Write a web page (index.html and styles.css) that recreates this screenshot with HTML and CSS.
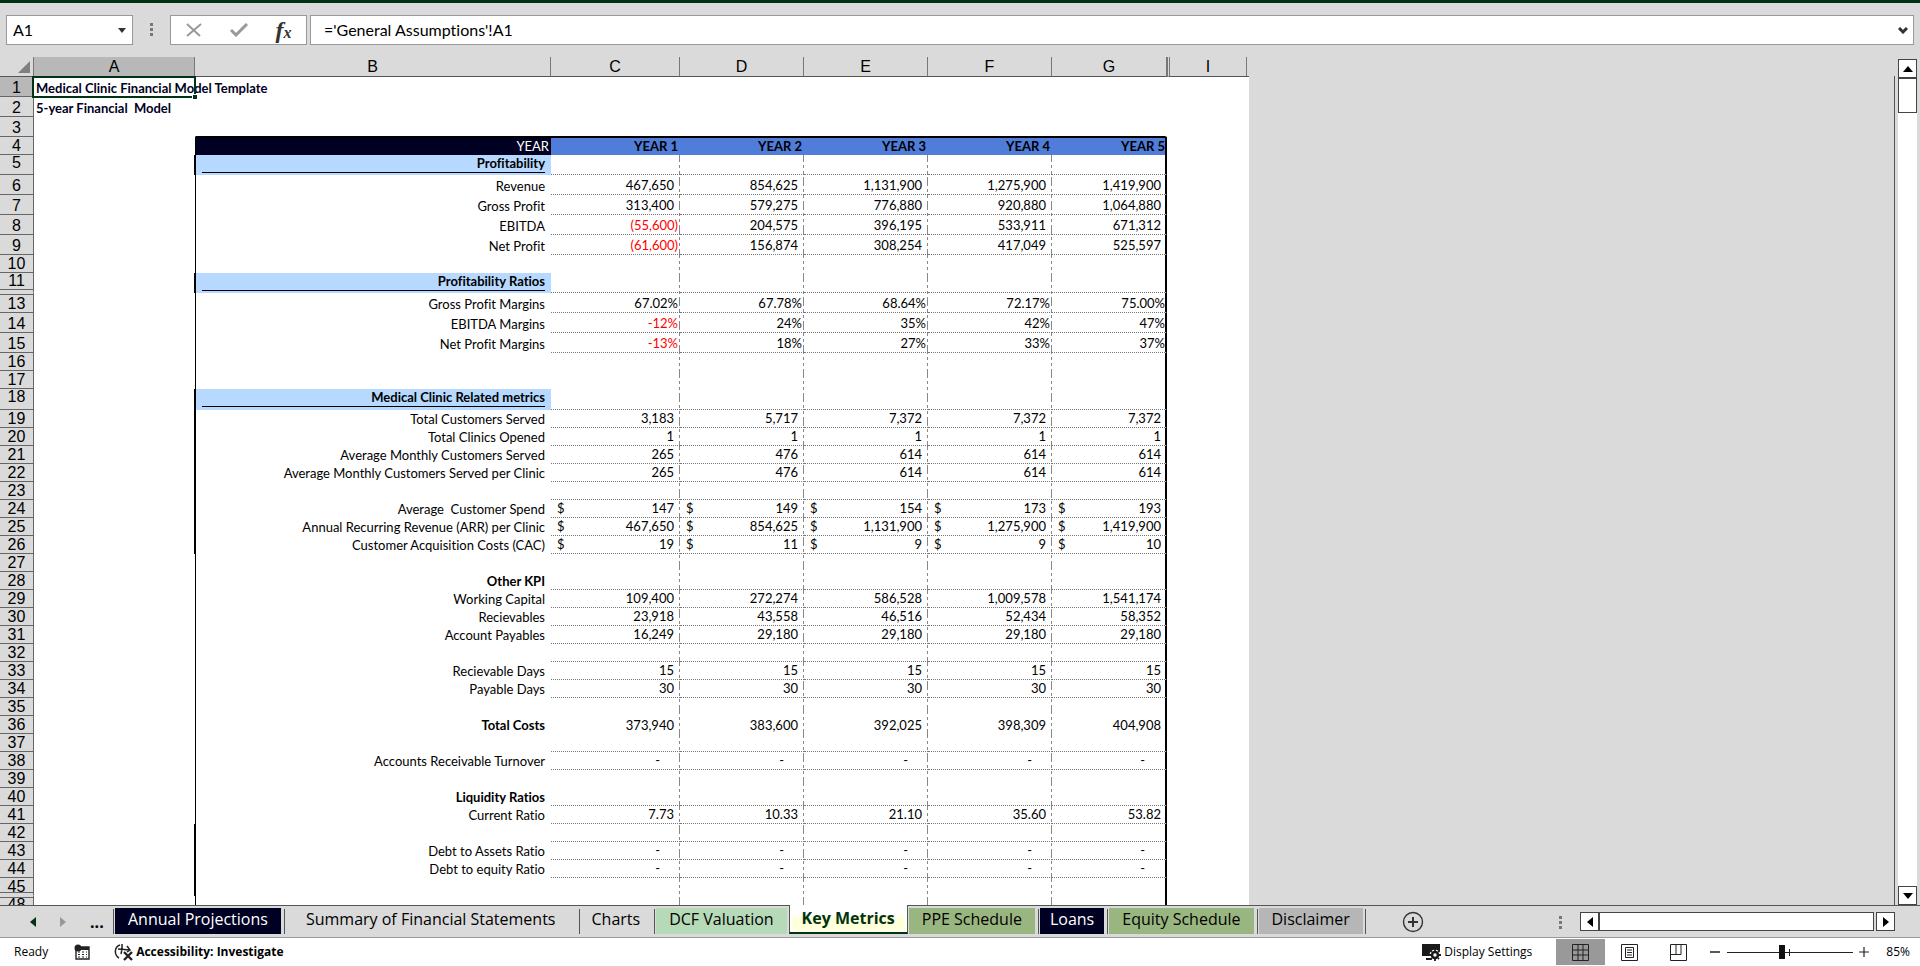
FILE: index.html
```html
<!DOCTYPE html>
<html lang="en">
<head>
<meta charset="utf-8">
<title>Medical Clinic Financial Model</title>
<link rel="stylesheet" href="styles.css">
</head>
<body>
<div class="app">
<div class="title-edge"></div>
<header class="formula-bar">
  <div class="name-box">
    <input class="name-input" aria-label="Name box" value="A1">
    <button class="drop" aria-label="Open name list"><svg width="8" height="5"><path d="M0 0h8L4 5z" fill="#333"/></svg></button>
  </div>
  <svg class="grip" width="4" height="14" fill="#777"><path d="M0 0h3v3H0zM0 5h3v3H0zM0 10h3v3H0z"/></svg>
  <div class="fx-box">
    <button class="fx-btn" aria-label="Cancel"><svg width="16" height="14" fill="none" stroke="#999" stroke-width="2"><path d="M1 1l13 12M15 1L1 13"/></svg></button>
    <button class="fx-btn" aria-label="Enter"><svg width="18" height="14" fill="none" stroke="#999" stroke-width="3"><path d="M1 7l5 5L17 1"/></svg></button>
    <button class="fx-btn fx-text" aria-label="Insert function">f<small>x</small></button>
  </div>
  <div class="formula-box">
    <input class="formula-input" aria-label="Formula" value="='General Assumptions'!A1">
    <button class="drop" aria-label="Expand formula bar"><svg width="10" height="7" fill="none" stroke="#333" stroke-width="3"><path d="M1 1l4 4 4-4"/></svg></button>
  </div>
</header>
<main class="workspace">
  <div class="pane">
    <table class="sheet">
      <colgroup><col class="c-head"><col class="c-a"><col class="c-b"><col class="c-c dash"><col class="c-d dash"><col class="c-d dash"><col class="c-d dash"><col class="c-g"><col class="c-i"></colgroup>
      <thead><tr><th class="corner"><svg width="12" height="12"><path d="M12 0v12H0z" fill="#808080"/></svg><th class="sel">A<th>B<th>C<th>D<th>E<th>F<th class="col-g">G<th class="col-i">I</thead>
      <tbody>
      <tr class="t blank title-row"><th class="sel">1<td class="title"><span class="title-text">Medical Clinic Financial Model Template</span><span class="cursor"></span><td><td><td><td><td><td><td>
      <tr class="t blank"><th>2<td class="title"><span class="title-text">5-year Financial&nbsp; Model</span><td><td><td><td><td><td><td>
      <tr class="t blank above-years"><th>3<td><td><td><td><td><td><td><td>
      <tr class="years"><th>4<td><td>YEAR<td>YEAR 1<td>YEAR 2<td>YEAR 3<td>YEAR 4<td>YEAR 5<td>
      <tr class="t sec dot thick"><th>5<td><td><span>Profitability</span><td><td><td><td><td><td>
      <tr class="t dot"><th>6<td><td>Revenue<td>467,650<td>854,625<td>1,131,900<td>1,275,900<td>1,419,900<td>
      <tr class="t dot"><th>7<td><td>Gross Profit<td>313,400<td>579,275<td>776,880<td>920,880<td>1,064,880<td>
      <tr class="t dot"><th>8<td><td>EBITDA<td class="neg">(55,600)<td>204,575<td>396,195<td>533,911<td>671,312<td>
      <tr class="t dot"><th>9<td><td>Net Profit<td class="neg">(61,600)<td>156,874<td>308,254<td>417,049<td>525,597<td>
      <tr><th>10<td><td><td><td><td><td><td><td>
      <tr class="t sec dot thick before-hidden"><th>11<td><td><span>Profitability Ratios</span><td><td><td><td><td><td>
      <tr class="t dot pct after-hidden"><th>13<td><td>Gross Profit Margins<td>67.02%<td>67.78%<td>68.64%<td>72.17%<td>75.00%<td>
      <tr class="t dot pct"><th>14<td><td>EBITDA Margins<td class="neg">-12%<td>24%<td>35%<td>42%<td>47%<td>
      <tr class="t dot pct"><th>15<td><td>Net Profit Margins<td class="neg">-13%<td>18%<td>27%<td>33%<td>37%<td>
      <tr><th>16<td><td><td><td><td><td><td><td>
      <tr><th>17<td><td><td><td><td><td><td><td>
      <tr class="t sec tall dot thick"><th>18<td><td><span>Medical Clinic Related metrics</span><td><td><td><td><td><td>
      <tr class="dot thick"><th>19<td><td>Total Customers Served<td>3,183<td>5,717<td>7,372<td>7,372<td>7,372<td>
      <tr class="dot thick"><th>20<td><td>Total Clinics Opened<td>1<td>1<td>1<td>1<td>1<td>
      <tr class="dot thick"><th>21<td><td>Average Monthly Customers Served<td>265<td>476<td>614<td>614<td>614<td>
      <tr class="dot thick"><th>22<td><td>Average Monthly Customers Served per Clinic<td>265<td>476<td>614<td>614<td>614<td>
      <tr class="dot thick"><th>23<td><td><td><td><td><td><td><td>
      <tr class="dot thick"><th>24<td><td>Average&nbsp; Customer Spend<td><i>$</i>147<td><i>$</i>149<td><i>$</i>154<td><i>$</i>173<td><i>$</i>193<td>
      <tr class="dot thick"><th>25<td><td>Annual Recurring Revenue (ARR) per Clinic<td><i>$</i>467,650<td><i>$</i>854,625<td><i>$</i>1,131,900<td><i>$</i>1,275,900<td><i>$</i>1,419,900<td>
      <tr class="dot thick"><th>26<td><td>Customer Acquisition Costs (CAC)<td><i>$</i>19<td><i>$</i>11<td><i>$</i>9<td><i>$</i>9<td><i>$</i>10<td>
      <tr><th>27<td><td><td><td><td><td><td><td>
      <tr class="dot"><th>28<td><td><b>Other KPI</b><td><td><td><td><td><td>
      <tr class="dot"><th>29<td><td>Working Capital<td>109,400<td>272,274<td>586,528<td>1,009,578<td>1,541,174<td>
      <tr class="dot"><th>30<td><td>Recievables<td>23,918<td>43,558<td>46,516<td>52,434<td>58,352<td>
      <tr class="dot"><th>31<td><td>Account Payables<td>16,249<td>29,180<td>29,180<td>29,180<td>29,180<td>
      <tr class="dot"><th>32<td><td><td><td><td><td><td><td>
      <tr class="dot"><th>33<td><td>Recievable Days<td>15<td>15<td>15<td>15<td>15<td>
      <tr class="dot"><th>34<td><td>Payable Days<td>30<td>30<td>30<td>30<td>30<td>
      <tr><th>35<td><td><td><td><td><td><td><td>
      <tr><th>36<td><td><b>Total Costs</b><td>373,940<td>383,600<td>392,025<td>398,309<td>404,908<td>
      <tr class="dot"><th>37<td><td><td><td><td><td><td><td>
      <tr class="dot nil"><th>38<td><td>Accounts Receivable Turnover<td>-<td>-<td>-<td>-<td>-<td>
      <tr><th>39<td><td><td><td><td><td><td><td>
      <tr class="dot"><th>40<td><td><b>Liquidity Ratios</b><td><td><td><td><td><td>
      <tr class="dot"><th>41<td><td>Current Ratio<td>7.73<td>10.33<td>21.10<td>35.60<td>53.82<td>
      <tr class="dot thick"><th>42<td><td><td><td><td><td><td><td>
      <tr class="dot thick nil"><th>43<td><td>Debt to Assets Ratio<td>-<td>-<td>-<td>-<td>-<td>
      <tr class="dot thick nil"><th>44<td><td>Debt to equity Ratio<td>-<td>-<td>-<td>-<td>-<td>
      <tr class="thick before-hidden"><th>45<td><td><td><td><td><td><td><td>
      <tr class="after-hidden"><th>48<td><td><td><td><td><td><td><td>
      </tbody>
    </table>
  </div>
  <div class="pane-edge"></div>
  <div class="vscroll">
    <button class="sb" aria-label="Scroll up"><svg width="10" height="6"><path d="M5 0l5 6H0z"/></svg></button>
    <div class="vthumb"></div>
    <div class="vtrack"></div>
    <button class="sb" aria-label="Scroll down"><svg width="10" height="6"><path d="M0 0h10L5 6z"/></svg></button>
  </div>
</main>
<nav class="tabs">
  <div class="tab-nav">
    <button aria-label="Previous sheet"><svg width="6" height="10"><path d="M6 0v10L0 5z" fill="#031"/></svg></button>
    <button aria-label="Next sheet"><svg width="6" height="10"><path d="M0 0v10l6-5z" fill="#999"/></svg></button>
    <button class="more" aria-label="More sheets">...</button>
  </div>
  <button class="tab navy">Annual Projections</button>
  <button class="tab wide">Summary of Financial Statements</button>
  <button class="tab plain">Charts</button>
  <button class="tab mint last">DCF Valuation</button>
  <button class="tab active"><span>Key Metrics</span></button>
  <button class="tab olive first">PPE Schedule</button>
  <button class="tab navy slim">Loans</button>
  <button class="tab olive">Equity Schedule</button>
  <button class="tab gray">Disclaimer</button>
  <button class="add" aria-label="New sheet"><svg width="22" height="22" fill="none" stroke="#333"><circle cx="11" cy="11" r="9.5" stroke-width="1.4"/><path d="M6 11h10M11 6v10" stroke-width="2"/></svg></button>
  <svg class="grip tab-grip" width="4" height="14" fill="#777"><path d="M0 0h3v3H0zM0 5h3v3H0zM0 10h3v3H0z"/></svg>
  <div class="hscroll">
    <button class="sb" aria-label="Scroll left"><svg width="6" height="10"><path d="M6 0v10L0 5z"/></svg></button>
    <div class="hthumb"></div>
    <button class="sb hright" aria-label="Scroll right"><svg width="6" height="10"><path d="M0 0v10l6-5z"/></svg></button>
  </div>
</nav>
<footer class="status">
  <span class="ready">Ready</span>
  <button class="macro" aria-label="Record macro"><svg width="16" height="16"><path d="M3 3h12v12H2V6" fill="none" stroke="#222" stroke-width="1.4"/><path d="M5 3h10v3H5z" fill="#222"/><circle cx="4" cy="4" r="3.5" fill="#222"/><path d="M4 8h2M8 8h2M12 8h1M4 10.500h2M8 10.500h2M12 10.500h1M4 13h2M8 13h2M12 13h1" stroke="#222"/></svg></button>
  <button class="access"><svg width="20" height="18" fill="none" stroke="#222" stroke-width="1.500"><path d="M6 2C0 4 0 12 5 15M4 6l12 1M8 1v5l-1 5M13 3l3 4-3 2"/><path d="M10 9l8 8M18 9l-8 8" stroke-width="2.400"/></svg>Accessibility: Investigate</button>
  <span class="spacer"></span>
  <button class="display"><svg width="20" height="18"><path d="M1 1h18v12H1zM5 15h6v2H5z" fill="#1a1a1a"/><circle cx="14" cy="12" r="5.500" fill="#fff"/><circle cx="14" cy="12" r="3" fill="#fff" stroke="#1a1a1a" stroke-width="2.500"/><path d="M14 6v2M14 16v2M8 12h2M18 12h2M10 8l1 1M17 15l1 1M18 8l-1 1M11 15l-1 1" stroke="#1a1a1a" stroke-width="1.800"/></svg>Display Settings</button>
  <button class="view on" aria-label="Normal view"><svg width="17" height="17" fill="none" stroke="#222"><path d="M.5.5h16v16H.5zM.5 6h16M.5 11h16M6 .5v16M11 .5v16"/></svg></button>
  <button class="view" aria-label="Page layout view"><svg width="17" height="17" fill="none" stroke="#222"><path d="M.5.5h16v16H.5zM4.500 3.500h8v10h-8zM6 6h5M6 8.500h5M6 11h5"/></svg></button>
  <button class="view" aria-label="Page break preview"><svg width="17" height="17" fill="none" stroke="#222"><path d="M.5.5h16v16H.5zM1 10.500h10V1M6 1v9"/></svg></button>
  <button class="zoom-btn minus" aria-label="Zoom out"><svg width="10" height="10"><path d="M0 5h10" stroke="#222" stroke-width="1.500"/></svg></button>
  <input class="zoom" type="range" min="10" max="160" value="75" aria-label="Zoom">
  <button class="zoom-btn plus" aria-label="Zoom in"><svg width="10" height="10"><path d="M0 5h10M5 0v10" stroke="#222" stroke-width="1.200"/></svg></button>
  <button class="percent">85%</button>
</footer>
</div>
</body>
</html>
```
FILE: styles.css
```css
* { box-sizing: border-box; }
body { margin: 0; }
button, input { font: inherit; color: inherit; margin: 0; padding: 0; border: 0; background: none; }
button { display: flex; align-items: center; justify-content: center; }
.app { display: flex; flex-direction: column; height: 100vh; overflow: hidden; background: #dadada; color: #000; font-family: "Open Sans", "Noto Sans", sans-serif; font-variant-ligatures: none; }
.title-edge { height: 3px; flex: none; background: #003214; }

.formula-bar { display: flex; flex: none; padding: 12px 6px; font: 16px/28px Lato, "Open Sans", sans-serif; font-variant-ligatures: none; }
.name-box, .fx-box, .formula-box { display: flex; height: 30px; border: 1px solid #999; background: #fff; }
.name-box { width: 127px; }
.name-input { flex: 1; min-width: 0; padding-left: 6px; }
.drop { width: 20px; flex: none; }
.grip { margin: 8px 16px 0 17px; flex: none; }
.fx-box { width: 137px; justify-content: center; margin-right: 3px; }
.fx-btn { width: 45px; }
.fx-text { font: italic bold 24px/24px "Liberation Serif", serif; color: #333; }
.fx-text small { font-size: 16px; padding-top: 6px; }
.formula-box { flex: 1; }
.formula-input { flex: 1; min-width: 0; padding-left: 13px; }

.workspace { display: flex; flex: 1; min-height: 0; }
.pane { flex: 1; min-width: 0; overflow: hidden; }
.pane-edge { width: 1px; margin-top: 19px; background: #555; }
.sheet { width: 1249px; table-layout: fixed; border-spacing: 0; font: 13px/17px Lato, "Open Sans", sans-serif; font-variant-ligatures: none; }
.c-head { width: 34px; }
.c-a { width: 161px; }
.c-b { width: 356px; }
.c-c { width: 129px; }
.c-d { width: 124px; }
.c-g { width: 115px; }
.c-i { width: 82px; }
.dash { background: repeating-linear-gradient(#888 0 9px, #fff 9px 12px, #888 12px 15px, #fff 15px 18px, #888 18px 21px, #fff 21px 24px) right top / 1px 100% no-repeat #fff; }
.sheet th { padding: 0; font: 16px/17px "Liberation Sans", Arial, sans-serif; text-align: center; }
.sheet thead th { height: 20px; padding-top: 1px; line-height: 18px; background: #dadada; border-bottom: 1px solid #555; border-right: 1px solid #777; }
.sheet thead .corner { text-align: right; padding: 0 3px 0 0; line-height: 12px; vertical-align: bottom; }
.corner svg { vertical-align: bottom; margin-bottom: 3px; }
.sheet thead .sel, .sheet tbody .sel { background: #b8b8b8; }
.sheet thead .col-i { border-left: 3px double #777; border-right: 0; padding-right: 3px; background: linear-gradient(#777, #777) right 2px top / 1px 100% no-repeat #dadada; }
.sheet tbody tr { height: 18px; }
.sheet tbody .t { height: 20px; }
.sheet tbody .tall { height: 21px; }
.sheet tbody th { background: #dadada; border-right: 1px solid #666; border-bottom: 1px solid #666; vertical-align: bottom; }
.sheet td { padding: 0 6px 0 0; text-align: right; vertical-align: bottom; white-space: nowrap; }
.sheet td:nth-child(2), .sheet td:nth-child(3), .sheet td:nth-child(8), .sheet td:nth-child(9) { background: #fff; }
.sheet td:nth-child(3) { border-left: 1px solid #000; }
.sheet td:nth-child(8) { border-right: 2px solid #000; padding-right: 4px; }
.sheet .blank td { background: #fff; border-color: transparent; }
.sheet .above-years td:nth-child(n+3):nth-child(-n+8) { border-bottom: 1px solid #000; }
.sheet .title { position: relative; padding: 0 0 0 2px; text-align: left; font-weight: bold; color: #000022; }
.title-text { position: relative; z-index: 1; }
.cursor { position: absolute; z-index: 2; inset: -1px -1px -1px -2px; border: 2px solid #003214; }
.cursor::after { content: ""; position: absolute; right: -3px; bottom: -3px; width: 4px; height: 4px; border: 1px solid #fff; border-width: 1px 0 0 1px; box-sizing: content-box; background: #003214; }
.sheet .years td:nth-child(n+3):nth-child(-n+8) { background: #4f7dd9; border-top: 1px solid #000; padding-right: 2px; font-weight: bold; }
.sheet .years td:nth-child(n+3):nth-child(8) { padding-right: 0; }
.sheet .years td:nth-child(n+3):nth-child(3) { background: #000022; color: #fff; font-weight: normal; }
.dot td:nth-child(n+4):nth-child(-n+8) { border-bottom: 1px dotted #777; }
.thick td:nth-child(2) { border-right: 1px solid #000; }
.sheet .sec th { vertical-align: top; line-height: 15px; }
.sheet .sec td:nth-child(3) { background: #b7d9ff; vertical-align: top; padding-left: 6px; font-weight: bold; line-height: 16px; }
.sec span { display: block; padding-bottom: 1px; border-bottom: 1px solid #000; }
.sheet .pct td:nth-child(n+4), .sheet td.neg { padding-right: 2px; }
.sheet .pct td:nth-child(8) { padding-right: 0; }
.sheet .neg { color: #f00; }
.sheet .nil td:nth-child(n+4) { padding-right: 20px; }
.sheet i { float: left; font-style: normal; padding-left: 6px; }
.before-hidden th { box-shadow: inset 0 -2px #dadada, inset 0 -3px #666; }
.sheet .before-hidden th { border-bottom-color: #dadada; }
.after-hidden th { box-shadow: inset 0 1px #dadada, inset 0 2px #666; }

.sb { background: #fff; border: 1px solid #444; flex: none; }
.vscroll { display: flex; flex-direction: column; width: 25px; padding: 2px 3px 0 3px; }
.vscroll .sb { height: 19px; }
.vthumb { height: 35px; flex: none; border: 1px solid #444; background: #fff; }
.vtrack { flex: 1; background: #fff; }

.tabs { display: flex; flex: none; height: 33px; border-top: 1px solid #555; border-bottom: 1px solid #999; padding-right: 25px; font-size: 16px; line-height: 22px; }
.tab-nav { display: flex; width: 112px; padding-left: 30px; gap: 24px; }
.tab-nav .more { font-weight: bold; }
.tab { height: 26px; margin: 2px 0 0 2px; padding: 0 13px 4px; position: relative; white-space: nowrap; border-left: 1px solid #dadada; border-right: 2px solid #dadada; }
.tab::before { content: ""; position: absolute; left: -2px; top: 1px; bottom: 0; width: 1px; background: #555; }
.wide { padding: 0 20px 4px; }
.plain { padding: 0 11px 4px; }
.slim { padding: 0 10px 4px; }
.navy { background: #000022; color: #fff; }
.mint { background: #b6d9b8; }
.olive { background: #9ab680; }
.gray { background: #b6b6b6; }
.active { margin: -1px 0 0; height: 29px; padding: 0 2px; border: 1px solid #555; border-top: 0; border-bottom: 2px solid #003214; background: #fff; color: #003214; font-weight: bold; }
.active::before, .first::before { display: none; }
.first { margin-left: 0; }
.active span { padding: 1px 10px 2px; background: linear-gradient(#fff 8px, #ffffd9 12px); }
.gray::after { content: ""; position: absolute; right: -3px; top: 1px; bottom: 0; width: 1px; background: #555; }
.add { width: 24px; margin-left: 36px; }
.tab-grip { margin: 10px 17px 0 auto; }
.hscroll { display: flex; height: 19px; margin-top: 6px; width: 315px; }
.hscroll .sb { width: 19px; }
.hthumb { flex: 1; border: 1px solid #444; background: #fff; margin-right: 2px; }

.status { display: flex; flex: none; align-items: center; height: 28px; background: #fff; font-size: 12px; line-height: 26px; padding: 0 10px 0 14px; }
.status button { height: 26px; flex: none; }
.macro { margin: 0 24px 0 26px; }
.access { font-weight: bold; gap: 2px; }
.spacer { flex: 1; }
.display { gap: 3px; margin-right: 24px; }
.view { width: 49px; }
.view.on { background: #999; }
.minus { margin-left: 7px; }
.zoom { appearance: none; width: 126px; height: 14px; margin: 0 6px 0 7px; background: linear-gradient(#222, #222) 62px 50% / 1px 7px no-repeat, linear-gradient(#222, #222) 0 50% / 100% 1px no-repeat; }
.zoom::-webkit-slider-thumb { appearance: none; width: 6px; height: 14px; background: #111; }
.percent { margin-left: 17px; }
```
